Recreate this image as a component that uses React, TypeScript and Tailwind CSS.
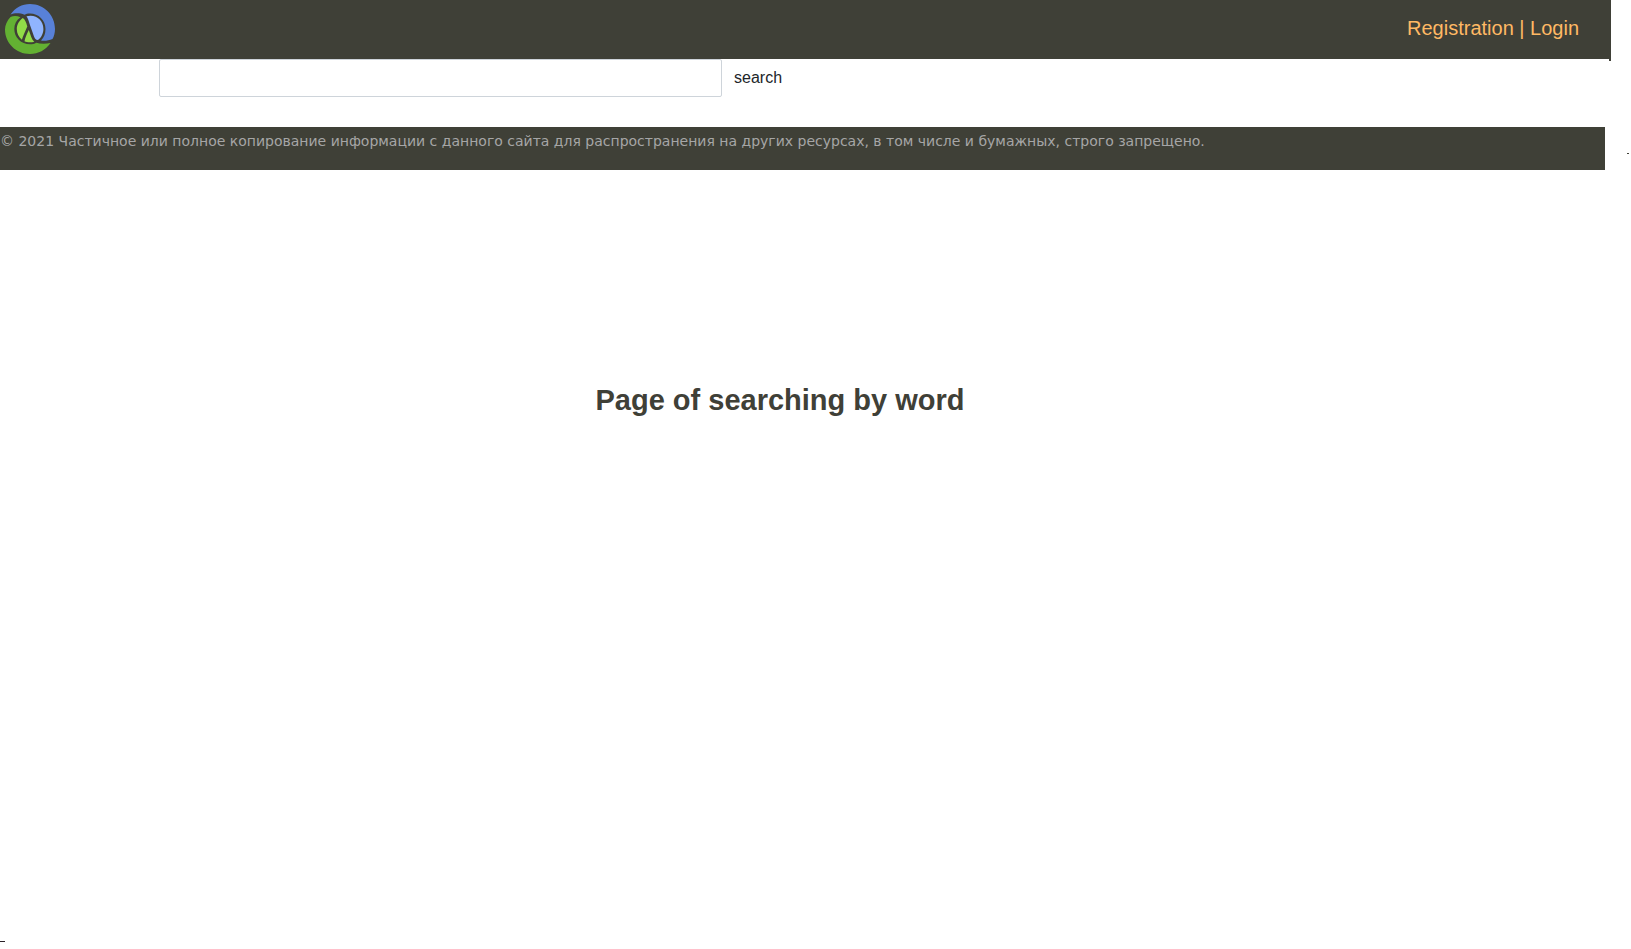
function Logo() {
  return (
    <svg viewBox="0 0 60 59" className="h-[59px] w-15" aria-hidden="true">
      <path
        d="M10.500 14.500C15 8 22 4 30 4C44 4 55 15 55 29C55 32.800 54 36.500 52.500 39C49 40.600 44.500 41.200 41 40.600C44.200 37.500 45.500 33.500 45.500 29C45.500 20 38.500 13.500 30 13.500C27.500 13.500 26 13.900 24.500 14.700C20 12.900 14.500 12.700 10.500 14.500Z"
        fill="#5881d8"
      />
      <path
        d="M10.500 17C13.500 15.800 17 15.800 20.500 17.200C16.500 20 14.300 24 14.300 29C14.300 37.500 21 44.300 30 44.300C32.500 44.300 34.500 43.800 36.200 42.800C40.500 44 46 44 50.500 43C45.500 50 38.500 54 30 54C16 54 5 43 5 29.500C5 25 7.200 20.500 10.500 17Z"
        fill="#63b132"
      />
      <path
        d="M26.500 16.300C27.800 15.900 29 15.700 30.500 15.700C38 15.700 43.400 21.600 43.400 29C43.400 33.500 41.300 37.700 38 40.100C35.500 39.500 35 39 34 36.500L29.800 24.500C28.900 21.500 28 18.500 26.500 16.300Z"
        fill="#90b4fe"
      />
      <path
        d="M22.800 18C25 19.500 26.200 22 27.300 26.500C25.300 31 23 36.300 21.900 39.700C18.700 37.100 16.800 33.400 16.800 29C16.800 24.500 19.200 20.500 22.800 18Z"
        fill="#91dc47"
      />
      <path
        d="M28.800 30C30.800 35.500 31.500 39.500 34.300 41.700C31 42.700 27 42.500 24.500 41.300C25 38 26.800 34 28.800 30Z"
        fill="#91dc47"
      />
    </svg>
  );
}

export default function App() {
  return (
    <div className="relative min-h-screen bg-white font-['Liberation_Sans',Arial,sans-serif] text-[#212529]">
      <header className="relative mr-5 flex h-[59px] items-center justify-between bg-[#3f4037] pr-8">
        <a href="#" aria-label="Home">
          <Logo />
        </a>
        <nav className="pb-[3px] text-xl leading-7 text-[#ffb964]">
          <a href="#registration">Registration</a> | <a href="#login">Login</a>
        </nav>
        <span className="absolute top-full right-0 h-0.5 w-0.5 bg-[#3f4037]" />
      </header>
      <main>
        <form className="mr-5 grid grid-cols-[159fr_563fr_889fr]" onSubmit={(e) => e.preventDefault()}>
          <input
            type="text"
            aria-label="Search word"
            className="col-start-2 h-[38px] w-full rounded-xs border border-[#ced4da] bg-white px-3 outline-none"
          />
          <button type="submit" className="ml-3 h-[38px] justify-self-start text-base">
            search
          </button>
        </form>
      </main>
      <footer className="mt-[30px] mr-[26px] h-[43px] bg-[#3f4037] pt-1 font-['DejaVu_Sans',Verdana,sans-serif] text-sm leading-5 text-[#a6a6a6]">
        © 2021 Частичное или полное копирование информации с данного сайта для распространения на других
        ресурсах, в том числе и бумажных, строго запрещено.
      </footer>
      <h1 className="mt-[212px] mr-[71px] text-center text-[29px] leading-9 font-bold text-[#3f4037]">
        Page of searching by word
      </h1>
      <span className="absolute top-[153px] right-0.5 h-px w-0.5 bg-[#3f4037]" />
      <span className="absolute bottom-[7px] left-0 h-px w-[5px] bg-[#2b2228]" />
    </div>
  );
}
